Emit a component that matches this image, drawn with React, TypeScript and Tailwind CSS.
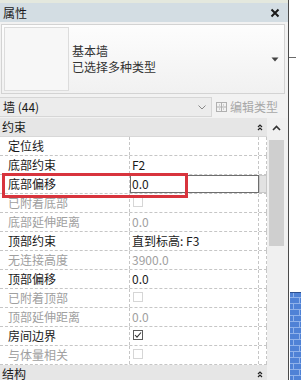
import React from "react";

type Row = {
  label: string;
  value?: string;
  kind: "text" | "check" | "edit";
  disabled?: boolean;
  checked?: boolean;
};

const rows: Row[] = [
  { label: "定位线", value: "", kind: "text" },
  { label: "底部约束", value: "F2", kind: "text" },
  { label: "底部偏移", value: "0.0", kind: "edit" },
  { label: "已附着底部", kind: "check", disabled: true },
  { label: "底部延伸距离", value: "0.0", kind: "text", disabled: true },
  { label: "顶部约束", value: "直到标高: F3", kind: "text" },
  { label: "无连接高度", value: "3900.0", kind: "text", disabled: true },
  { label: "顶部偏移", value: "0.0", kind: "text" },
  { label: "已附着顶部", kind: "check", disabled: true },
  { label: "顶部延伸距离", value: "0.0", kind: "text", disabled: true },
  { label: "房间边界", kind: "check", checked: true },
  { label: "与体量相关", kind: "check", disabled: true },
];

function Collapse() {
  return (
    <svg width="6" height="7" viewBox="0 0 6 7" className="block">
      <path d="M1 3 L3 1 L5 3" fill="none" stroke="#222" strokeWidth="1.2" />
      <path d="M1 6 L3 4 L5 6" fill="none" stroke="#222" strokeWidth="1.2" />
    </svg>
  );
}

function GroupHeader({ title }: { title: string }) {
  return (
    <div className="h-[19px] shrink-0 bg-[#e6e6e6] flex items-center pl-[2px] pr-[4px] border-b border-[#d8d8d8]">
      <span className="text-[12px] leading-[16px] text-[#1a1a1a]">{title}</span>
      <div className="ml-auto">
        <Collapse />
      </div>
    </div>
  );
}

export default function App() {
  return (
    <div
      className="w-[301px] h-[380px] overflow-hidden bg-white flex relative"
      style={{ fontFamily: '"Noto Sans CJK SC", "Liberation Sans", sans-serif' }}
    >
      {/* main panel */}
      <div className="w-[288px] shrink-0 flex flex-col">
        <div className="h-[3px] shrink-0 bg-[#e4e8de]" />
        {/* title bar */}
        <div className="h-[19px] shrink-0 bg-[#d3dde3] flex items-center pl-[3px] pr-[8px]">
          <span className="text-[12px] leading-[16px] text-[#1a1a1a]">属性</span>
          <svg width="10" height="10" viewBox="0 0 10 10" className="ml-auto block">
            <path d="M1.5 1.5 L8.5 8.5 M8.5 1.5 L1.5 8.5" stroke="#1a1a1a" strokeWidth="2" />
          </svg>
        </div>
        {/* type selector */}
        <div className="h-[74px] shrink-0 bg-[#f2f2f2] pl-[1px] pr-[3px] py-[2px]">
          <div className="h-full border border-[#d3d3d3] bg-gradient-to-b from-[#fdfdfd] to-[#f1f1f1] flex items-center pl-[2px] pr-[5px]">
            <div className="w-[65px] h-[64px] border border-[#dcdcdc] bg-[#f7f7f7] shrink-0" />
            <div className="ml-[3px] flex flex-col">
              <span className="text-[12px] leading-[16px] text-[#333]">基本墙</span>
              <span className="text-[12px] leading-[16px] text-[#333]">已选择多种类型</span>
            </div>
            <svg width="8" height="5" viewBox="0 0 8 5" className="ml-auto block">
              <path d="M0.5 0.5 L7.5 0.5 L4 4.5 Z" fill="#444" />
            </svg>
          </div>
        </div>
        {/* instance row */}
        <div className="h-[22px] shrink-0 bg-[#f2f2f2] flex items-center">
          <div className="w-[212px] h-[20px] bg-[#ececec] border border-[#d6d6d6] border-l-0 flex items-center pl-[3px] pr-[5px]">
            <span className="text-[12px] leading-[16px] text-[#1a1a1a]">墙 (44)</span>
            <svg width="8" height="5" viewBox="0 0 8 5" className="ml-auto block">
              <path d="M0.5 0.5 L4 4 L7.5 0.5" fill="none" stroke="#888" strokeWidth="1" />
            </svg>
          </div>
          <div className="ml-[4px] flex items-center">
            <svg width="12" height="12" viewBox="0 0 12 12" className="block">
              <rect x="0.5" y="1.5" width="10" height="9" fill="none" stroke="#b0b0b0" />
              <path d="M0.5 6 H10.5 M5.5 1.5 V10.5 M3 4 H4 M7 4 H8 M3 8 H4 M7 8 H8" stroke="#b0b0b0" />
            </svg>
            <span className="ml-[2px] text-[12px] leading-[16px] text-[#a8a8a8]">编辑类型</span>
          </div>
        </div>
        {/* grid + scrollbar */}
        <div className="flex-1 flex min-h-0">
          <div className="w-[267px] shrink-0 flex flex-col">
            <GroupHeader title="约束" />
            {rows.map((r, i) => {
              const color = r.disabled ? "text-[#a0a0a0]" : "text-[#1a1a1a]";
              return (
                <div
                  key={i}
                  className="h-[19px] shrink-0 flex border-b border-dashed border-[#c6c6c6] bg-white"
                >
                  <div className="w-[130px] shrink-0 border-r border-dashed border-[#c6c6c6] pl-[8px] flex items-center">
                    <span className={`text-[12px] leading-[16px] ${color}`}>{r.label}</span>
                  </div>
                  {r.kind === "edit" ? (
                    <>
                      <div className="w-[129px] shrink-0 border border-[#6e6e6e] bg-white pl-[1px] flex items-center">
                        <span className="text-[12px] leading-[16px] text-[#1a1a1a]">{r.value}</span>
                      </div>
                      <div className="w-[8px] shrink-0 bg-[#e2e2e2] border border-[#c8c8c8]" />
                    </>
                  ) : (
                    <>
                      <div className="w-[129px] shrink-0 border-r border-dashed border-[#c6c6c6] pl-[2px] flex items-center">
                        {r.kind === "check" ? (
                          <div
                            className={`w-[10px] h-[10px] mb-[3px] ml-[1px] border flex items-center justify-center ${
                              r.disabled ? "border-[#d6d6d6]" : "border-[#5a5a5a]"
                            }`}
                          >
                            {r.checked && (
                              <svg width="8" height="8" viewBox="0 0 8 8" className="block">
                                <path d="M1 4 L3 6.2 L7 1.5" fill="none" stroke="#333" strokeWidth="1.1" />
                              </svg>
                            )}
                          </div>
                        ) : (
                          <span className={`text-[12px] leading-[16px] ${color}`}>{r.value}</span>
                        )}
                      </div>
                      <div className="w-[8px] shrink-0 border-r border-dashed border-[#c6c6c6]" />
                    </>
                  )}
                </div>
              );
            })}
            <GroupHeader title="结构" />
          </div>
          {/* scrollbar */}
          <div className="flex-1 bg-[#f0f0f0] flex flex-col items-start">
            <div className="h-[20px] w-full flex items-center justify-center pr-[2px]">
              <svg width="9" height="6" viewBox="0 0 9 6" className="block">
                <path d="M1 5 L4.5 1.5 L8 5" fill="none" stroke="#333" strokeWidth="1.6" />
              </svg>
            </div>
            <div className="ml-[2px] mt-[2px] w-[15px] h-[106px] bg-[#cfcfcf]" />
          </div>
        </div>
      </div>
      {/* right canvas strip */}
      <div className="flex-1 flex flex-col border-l border-[#4a4a4a] bg-white">
        <div className="h-[57px] shrink-0" />
        <div className="h-px w-[7px] bg-[#6a6a6a] shrink-0" />
        <div className="flex-1" />
        <svg width="12" height="88" viewBox="0 0 12 88" className="block ml-[1px] shrink-0">
          <defs>
            <pattern id="brick" width="12" height="12" patternUnits="userSpaceOnUse">
              <rect width="12" height="12" fill="#4f82d6" />
              <path d="M0 5.5 H12 M0 11.5 H12 M3.5 0 V5.5 M9.5 6 V11.5" stroke="#8fb2ea" strokeWidth="1" />
            </pattern>
          </defs>
          <rect x="0" y="0" width="12" height="1" fill="#2c4f8f" />
          <rect x="0" y="1" width="12" height="87" fill="url(#brick)" />
        </svg>
      </div>
      {/* annotation */}
      <div className="absolute left-[2px] top-[173px] w-[186px] h-[25px] border-[3px] border-[#d8343d] pointer-events-none" />
    </div>
  );
}
